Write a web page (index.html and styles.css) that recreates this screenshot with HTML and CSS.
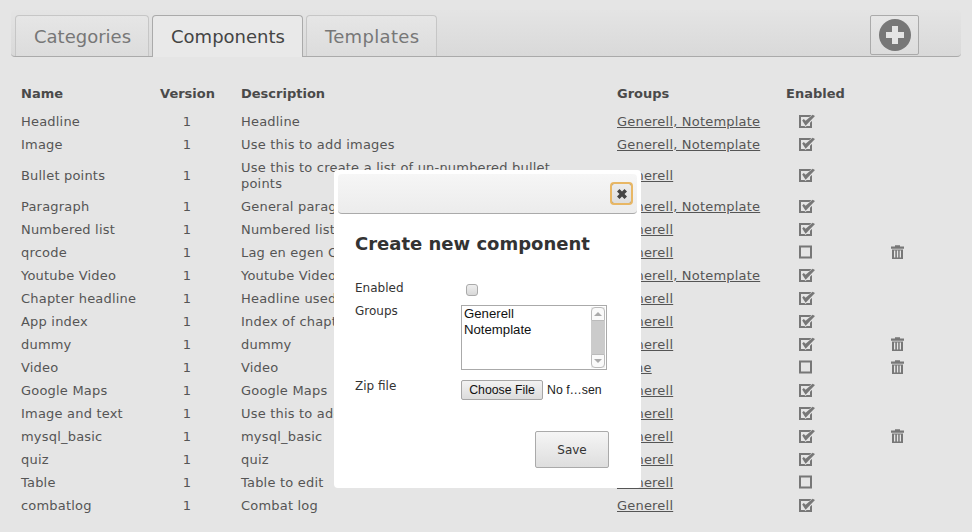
FILE: index.html
```html
<!DOCTYPE html>
<html lang="en">
<head>
<meta charset="utf-8">
<title>Components</title>
<link rel="stylesheet" href="styles.css">
</head>
<body>
<svg class="defs" width="0" height="0" aria-hidden="true">
  <symbol id="chk" viewBox="0 0 16 14">
    <path d="M1 2h11v11H1z" fill="none" stroke="#777" stroke-width="2"/>
    <path d="M3.700 6.800l2.900 2.900L14.900 1.800" fill="none" stroke="#e5e5e5" stroke-width="4.600"/>
    <path d="M3.200 6.600l1.600-1.600 1.800 1.800L13.600.8l2.400 1.100-9.400 9.900z" fill="#777"/>
  </symbol>
  <symbol id="box" viewBox="0 0 16 14">
    <path d="M1 1.500h11v11H1z" fill="none" stroke="#777" stroke-width="2"/>
  </symbol>
  <symbol id="trash" viewBox="0 0 13 14">
    <path d="M0 1.500h13v2.300H0zM4 .2h5v1.500H4z" fill="#777"/>
    <path d="M1 4.500h11V14H1z" fill="#777"/>
    <path d="M3 5.500h1.300v7H3zM5.900 5.500h1.300v7H5.900zM8.700 5.500H10v7H8.700z" fill="#e5e5e5"/>
  </symbol>
</svg>
<div class="tabbar">
  <div class="tab">Categories</div>
  <div class="tab active">Components</div>
  <div class="tab tab-wide">Templates</div>
  <button class="add" type="button" aria-label="Add">
    <svg width="32" height="32" viewBox="0 0 32 32"><circle cx="16" cy="16" r="16" fill="#777"/><path d="M13 7h6v6h6v6h-6v6h-6v-6H7v-6h6z" fill="#e4e4e4"/></svg>
  </button>
</div>
<table class="list">
  <thead>
    <tr><th class="c-name">Name</th><th class="c-ver">Version</th><th class="c-desc">Description</th><th class="c-grp">Groups</th><th class="c-en">Enabled</th><th class="c-del"></th></tr>
  </thead>
  <tbody>
    <tr><td>Headline</td><td class="num">1</td><td>Headline</td><td><a href="#">Generell, Notemplate</a></td><td class="ic"><svg class="i"><use href="#chk"/></svg></td><td></td></tr>
    <tr><td>Image</td><td class="num">1</td><td>Use this to add images</td><td><a href="#">Generell, Notemplate</a></td><td class="ic"><svg class="i"><use href="#chk"/></svg></td><td></td></tr>
    <tr><td>Bullet points</td><td class="num">1</td><td class="wrap">Use this to create a list of un-numbered bullet points</td><td><a href="#">Generell</a></td><td class="ic"><svg class="i"><use href="#chk"/></svg></td><td></td></tr>
    <tr><td>Paragraph</td><td class="num">1</td><td>General paragraph</td><td><a href="#">Generell, Notemplate</a></td><td class="ic"><svg class="i"><use href="#chk"/></svg></td><td></td></tr>
    <tr><td>Numbered list</td><td class="num">1</td><td>Numbered list</td><td><a href="#">Generell</a></td><td class="ic"><svg class="i"><use href="#chk"/></svg></td><td></td></tr>
    <tr><td>qrcode</td><td class="num">1</td><td>Lag en egen QR-kode</td><td><a href="#">Generell</a></td><td class="ic"><svg class="i"><use href="#box"/></svg></td><td class="del"><svg class="t"><use href="#trash"/></svg></td></tr>
    <tr><td>Youtube Video</td><td class="num">1</td><td>Youtube Video</td><td><a href="#">Generell, Notemplate</a></td><td class="ic"><svg class="i"><use href="#chk"/></svg></td><td></td></tr>
    <tr><td>Chapter headline</td><td class="num">1</td><td>Headline used for chapters</td><td><a href="#">Generell</a></td><td class="ic"><svg class="i"><use href="#chk"/></svg></td><td></td></tr>
    <tr><td>App index</td><td class="num">1</td><td>Index of chapters</td><td><a href="#">Generell</a></td><td class="ic"><svg class="i"><use href="#chk"/></svg></td><td></td></tr>
    <tr><td>dummy</td><td class="num">1</td><td>dummy</td><td><a href="#">Generell</a></td><td class="ic"><svg class="i"><use href="#chk"/></svg></td><td class="del"><svg class="t"><use href="#trash"/></svg></td></tr>
    <tr><td>Video</td><td class="num">1</td><td>Video</td><td><a href="#">None</a></td><td class="ic"><svg class="i"><use href="#box"/></svg></td><td class="del"><svg class="t"><use href="#trash"/></svg></td></tr>
    <tr><td>Google Maps</td><td class="num">1</td><td>Google Maps</td><td><a href="#">Generell</a></td><td class="ic"><svg class="i"><use href="#chk"/></svg></td><td></td></tr>
    <tr><td>Image and text</td><td class="num">1</td><td>Use this to add image and text</td><td><a href="#">Generell</a></td><td class="ic"><svg class="i"><use href="#chk"/></svg></td><td></td></tr>
    <tr><td>mysql_basic</td><td class="num">1</td><td>mysql_basic</td><td><a href="#">Generell</a></td><td class="ic"><svg class="i"><use href="#chk"/></svg></td><td class="del"><svg class="t"><use href="#trash"/></svg></td></tr>
    <tr><td>quiz</td><td class="num">1</td><td>quiz</td><td><a href="#">Generell</a></td><td class="ic"><svg class="i"><use href="#chk"/></svg></td><td></td></tr>
    <tr><td>Table</td><td class="num">1</td><td>Table to edit</td><td><a href="#">Generell</a></td><td class="ic"><svg class="i"><use href="#box"/></svg></td><td></td></tr>
    <tr><td>combatlog</td><td class="num">1</td><td>Combat log</td><td><a href="#">Generell</a></td><td class="ic"><svg class="i"><use href="#chk"/></svg></td><td></td></tr>
  </tbody>
</table>
<div class="dialog" role="dialog">
  <div class="titlebar">
    <button class="close" type="button" aria-label="Close">
      <svg width="10" height="10" viewBox="0 0 10 10"><path d="M2.500 0L5 2.500 7.500 0 10 2.500 7.500 5 10 7.500 7.500 10 5 7.500 2.500 10 0 7.500 2.500 5 0 2.500z" fill="#444"/></svg>
    </button>
  </div>
  <div class="content">
    <h2>Create new component</h2>
    <div class="form">
      <label class="lbl l-en">Enabled</label>
      <div class="f-en"><input type="checkbox" class="cb"></div>
      <label class="lbl l-grp">Groups</label>
      <div class="listbox">
        <div class="opts"><div>Generell</div><div>Notemplate</div></div>
        <div class="sb">
          <div class="arrow up"></div>
          <div class="thumb"></div>
          <div class="arrow down"></div>
        </div>
      </div>
      <label class="lbl l-zip">Zip file</label>
      <input type="file" class="file">
    </div>
    <div class="actions"><button class="save" type="button">Save</button></div>
  </div>
</div>
</body>
</html>
```
FILE: styles.css
```css
html, body { margin: 0; padding: 0; height: 100%; overflow: hidden; }
body {
  background: #e5e5e5;
  color: #555;
  font-family: "DejaVu Sans", sans-serif;
  font-size: 13px;
  padding: 10px 11px 0 12px;
  box-sizing: border-box;
  position: relative;
}
.defs { position: absolute; }

.tabbar {
  height: 47px;
  box-sizing: border-box;
  margin-left: -1px;
  padding: 5px 0 0 4px;
  display: flex;
  align-items: flex-end;
  gap: 3px;
  background: linear-gradient(#e4e4e4, #d9d9d9);
  border-bottom: 1px solid #aaa;
  border-radius: 4px;
  position: relative;
}
.tab {
  height: 41px;
  box-sizing: border-box;
  padding: 0 17px 0 18px;
  display: flex;
  align-items: center;
  font-size: 18px;
  color: #777;
  background: linear-gradient(#e6e6e6, #dcdcdc);
  border: 1px solid #c6c6c6;
  border-bottom: 0;
  border-radius: 4px 4px 0 0;
}
.tab-wide { letter-spacing: 0.33px; }
.tab.active {
  height: 42px;
  margin-bottom: -1px;
  color: #444;
  background: #e9e9e9;
  border-color: #aaa;
}
.add {
  position: absolute;
  left: 859px;
  top: 5px;
  width: 49px;
  height: 40px;
  padding: 0;
  display: flex;
  align-items: center;
  justify-content: center;
  background: linear-gradient(#e6e6e6, #dcdcdc);
  border: 1px solid #aaa;
  border-radius: 2px;
}

.list {
  margin-top: 25px;
  width: 913px;
  table-layout: fixed;
  border-collapse: collapse;
}
.list th {
  height: 23px;
  padding: 0 0 0 9px;
  text-align: left;
  font-weight: bold;
  color: #4a4a4a;
}
.list td {
  height: 23px;
  padding: 0 0 0 9px;
  color: #555;
  letter-spacing: 0.2px;
}
.list tbody tr:first-child td { height: 28px; padding-top: 5px; box-sizing: border-box; }
.c-name { width: 121px; }
.c-ver { width: 81px; }
.list th.c-ver { padding: 0; text-align: right; padding-right: 17px; width: 73px; }
.c-desc { width: 367px; }
.c-grp { width: 160px; }
.c-en { width: 84px; }
.c-del { width: auto; }
.list td.num { text-align: center; padding-left: 0; }
.list td.wrap { height: 39px; line-height: 16px; padding-right: 40px; }
.list a { color: #555; text-decoration: underline; }
.list td.ic { padding-left: 22px; line-height: 0; }
.list td.del { padding-left: 21px; line-height: 0; }
.i { width: 16px; height: 14px; display: block; margin-top: -2px; }
.t { width: 13px; height: 14px; display: block; margin-top: -1px; }

.dialog {
  position: absolute;
  left: 334px;
  top: 170px;
  width: 307px;
  height: 318px;
  box-sizing: border-box;
  padding: 4px 4px 0;
  background: #fff;
  border-radius: 4px;
  color: #333;
}
.titlebar {
  height: 40px;
  box-sizing: border-box;
  background: linear-gradient(#f6f6f6, #ececec);
  border-bottom: 1px solid #aaa;
  border-radius: 4px;
  display: flex;
  justify-content: flex-end;
  align-items: flex-start;
  padding: 9px 5px 0 0;
}
.close {
  width: 21px;
  height: 21px;
  padding: 0;
  display: flex;
  align-items: center;
  justify-content: center;
  background: linear-gradient(#ececec, #dedede);
  border: 1px solid #777;
  outline: 2px solid #e8b765;
  outline-offset: -1px;
  border-radius: 3px;
}
.content { padding: 0 17px; }
h2 {
  margin: 19px 0 0;
  font-size: 18px;
  line-height: 22px;
  font-weight: bold;
  color: #333;
}
.form {
  margin-top: 26px;
  display: grid;
  grid-template-columns: 106px 146px;
  align-items: start;
}
.lbl {
  font-family: "DejaVu Sans", sans-serif;
  font-size: 12px;
  line-height: 15px;
  color: #333;
}
.l-en { height: 24px; }
.l-grp { margin-top: -1px; }
.l-zip { margin-top: 9px; }
.f-en { padding: 3px 0 0 5px; }
.cb {
  appearance: none;
  display: block;
  width: 12px;
  height: 12px;
  margin: 0;
  background: linear-gradient(#eee, #d8d8d8);
  border: 1px solid #aaa;
  border-radius: 3px;
}
.listbox {
  width: 146px;
  height: 65px;
  box-sizing: border-box;
  border: 1px solid #aaa;
  display: flex;
  font-family: "Liberation Sans", Arial, sans-serif;
  font-size: 13.2px;
  line-height: 16px;
  color: #111;
}
.opts { flex: 1; padding: 0 2px; }
.sb {
  width: 14px;
  margin: 1px;
  display: flex;
  flex-direction: column;
  background: #f0f0f0;
}
.arrow {
  height: 14px;
  box-sizing: border-box;
  background: #fafafa;
  border: 1px solid #bbb;
  display: flex;
  align-items: center;
  justify-content: center;
}
.arrow.up { border-radius: 4px 4px 0 0; }
.arrow.down { border-radius: 0 0 4px 4px; }
.arrow::after {
  content: "";
  border-left: 4px solid transparent;
  border-right: 4px solid transparent;
}
.arrow.up::after { border-bottom: 4px solid #aaa; }
.arrow.down::after { border-top: 4px solid #aaa; }
.thumb { flex: 1; background: #cbcbcb; }
.file {
  margin-top: 10px;
  width: 146px;
  font-family: "Liberation Sans", Arial, sans-serif;
  font-size: 12.3px;
  color: #222;
}
.file::file-selector-button {
  width: 82px;
  height: 20px;
  padding: 0;
  margin-right: 4px;
  font: inherit;
  color: #111;
  background: linear-gradient(#f2f2f2, #dcdcdc);
  border: 1px solid #a6a6a6;
  border-radius: 2px;
}
.actions { margin-top: 31px; display: flex; justify-content: flex-end; padding-right: 11px; }
.save {
  width: 74px;
  height: 37px;
  padding: 0;
  font-family: "DejaVu Sans", sans-serif;
  font-size: 12px;
  color: #333;
  background: linear-gradient(#f5f5f5, #dedede);
  border: 1px solid #aaa;
  border-radius: 2px;
}
```
